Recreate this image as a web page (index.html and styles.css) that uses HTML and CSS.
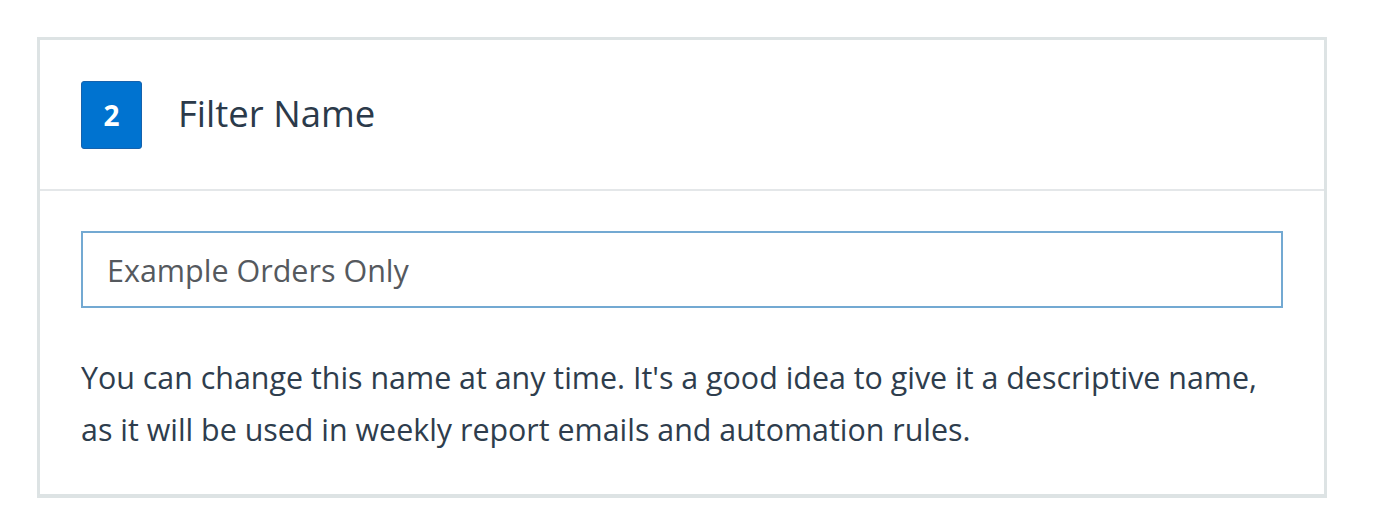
FILE: index.html
```html
<!DOCTYPE html>
<html>
<head>
<meta charset="utf-8">
<link rel="stylesheet" href="styles.css">
</head>
<body>
<section class="card">
  <header class="card-header">
    <span class="step">2</span>
    <h2 class="title">Filter Name</h2>
  </header>
  <div class="card-body">
    <input class="name-input" type="text" value="Example Orders Only">
    <p class="help">You can change this name at any time. It's a good idea to give it a descriptive name, as it will be used in weekly report emails and automation rules.</p>
  </div>
</section>
</body>
</html>
```
FILE: styles.css
```css
html, body {
  margin: 0;
  padding: 0;
  background: #ffffff;
}
body {
  padding: 37px 67px 0 37px;
  font-family: "Open Sans", "Noto Sans", sans-serif;
}
.card {
  width: 1284px;
  border: 3px solid #dde3e4;
  border-bottom-width: 4px;
  background: #fff;
}
.card-header {
  display: flex;
  align-items: center;
  gap: 36px;
  padding: 41px 41px 40px 41px;
  border-bottom: 2px solid #e4e7e9;
}
.step {
  box-sizing: border-box;
  width: 61px;
  height: 68px;
  display: flex;
  align-items: center;
  justify-content: center;
  background: #0073d0;
  border: 1px solid #1562ad;
  border-radius: 3px;
  color: #fff;
  font-weight: 700;
  font-size: 28px;
}
.title {
  margin: 0 0 4px 0;
  font-size: 36.5px;
  font-weight: 400;
  color: #2b3a4a;
}
.card-body {
  padding: 40px 41px 38px 41px;
}
.name-input {
  display: block;
  box-sizing: border-box;
  width: 100%;
  height: 77px;
  padding: 0 24px;
  border: 2px solid #73a9d2;
  border-radius: 0;
  outline: none;
  font-family: inherit;
  font-size: 30.5px;
  color: #55595e;
  background: #fff;
}
.help {
  margin: 44px 0 0 0;
  font-size: 30.4px;
  line-height: 52px;
  color: #2e3d4d;
}
```
